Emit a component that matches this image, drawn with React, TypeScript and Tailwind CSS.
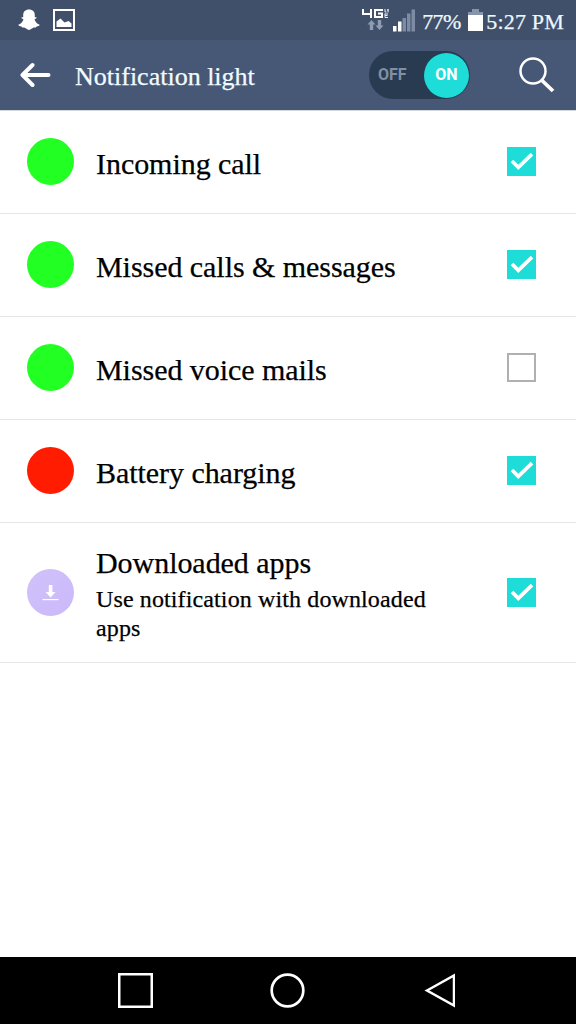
import { useState } from 'react'
import clsx from 'clsx'

type Item = {
  id: string
  title: string
  detail?: string
  color: 'green' | 'red' | 'app'
  enabled: boolean
}

const initialItems: Item[] = [
  { id: 'incoming', title: 'Incoming call', color: 'green', enabled: true },
  { id: 'missed', title: 'Missed calls & messages', color: 'green', enabled: true },
  { id: 'voicemail', title: 'Missed voice mails', color: 'green', enabled: false },
  { id: 'battery', title: 'Battery charging', color: 'red', enabled: true },
  {
    id: 'apps',
    title: 'Downloaded apps',
    detail: 'Use notification with downloaded apps',
    color: 'app',
    enabled: true,
  },
]

function StatusBar() {
  return (
    <div className="flex h-10 items-center bg-[#40506b] pl-[18px] pr-3 text-[#edf8ff]">
      <svg className="h-[22px] w-[22px]" viewBox="0 0 22 22" fill="#fff">
        <path d="M11 .5C7.300.5 5.200 2.800 5.200 6v2.200l-1.500.1c-.6.300-.3 1 .4 1.300l1.400.8C4.600 12.800 2.800 15 .300 15.800c.2 1 1.700 1.500 3.200 1.600l.6 1.200c2-.3 3 .2 4 1 1.100.9 2 1.400 2.900 1.400s1.800-.5 2.900-1.400c1-.8 2-1.300 4-1l.6-1.200c1.500-.1 3-.6 3.200-1.600-2.500-.8-4.300-3-5.200-5.400l1.400-.8c.7-.3 1-1 .4-1.300l-1.500-.1V6C16.800 2.800 14.700.5 11 .5z" />
      </svg>
      <svg className="ml-[13px] h-[22px] w-[22px]" viewBox="0 0 22 22">
        <rect x="1" y="1" width="20" height="20" fill="none" stroke="#fff" strokeWidth="2" />
        <path d="M3.500 18v-5.500L7.500 9.500l4 4 4-1.500 3 2.500V18z" fill="#fff" />
      </svg>

      <div className="ml-auto flex items-center">
        <svg className="h-[26px] w-[54px]" viewBox="0 0 54 26">
          {/* 4G LTE badge */}
          <g fill="none" stroke="#fff" strokeWidth="2">
            <path d="M1 2v5h9M9 2v9" />
            <path d="M21 3h-8v7h7V6.500h-4" />
          </g>
          <path d="M23 2v3h1.500M26 2v3.500M25 3h2M23 6.500v4M23 7h3M23 8.500h2.500M23 10.500h3" stroke="#e5eaf0" strokeWidth="1" fill="none" />
          <path d="M9.500 13l4 4.500h-2.300V23H7.800v-5.500H5.500zM17.500 23l-4-4.500h2.300V13h3.400v5.500h2.300z" fill="#8f9bb0" />
          <path d="M31 19h3.500v5.500H31zM36 14.500h3.500v10H36z" fill="#fff" />
          <path d="M40.500 11H44v13.500h-3.500zM45 6.500h3.500v18H45zM49.500 2.500H53v22h-3.500z" fill="#7d8ba3" />
        </svg>
        <span className="ml-[6px] mt-[3px] w-[39px] whitespace-nowrap text-[22px] leading-[26px] tracking-[-0.6px]">77%</span>
        <svg className="ml-[7px] h-[22px] w-[15px]" viewBox="0 0 15 22">
          <path d="M4 0h7v3h4v3H0V3h4z" fill="#8794aa" />
          <rect y="6" width="15" height="16" fill="#fff" />
        </svg>
        <span className="ml-[3px] mt-[3px] whitespace-nowrap text-[22px] leading-[26px] tracking-[0.2px]">5:27 PM</span>
      </div>
    </div>
  )
}

function Toggle({ on, onChange }: { on: boolean; onChange: () => void }) {
  return (
    <button
      onClick={onChange}
      className="flex h-12 w-[101px] items-center justify-between rounded-full bg-[#283b51] pl-[9px] pr-[1px] font-['Roboto',sans-serif] text-[16px] font-bold [-webkit-text-stroke:0]"
    >
      <span className="text-[#8190a4]">OFF</span>
      <span
        className={clsx(
          'flex h-[45px] w-[45px] items-center justify-center rounded-full text-white',
          on ? 'bg-[#1edcd7]' : 'bg-[#65758c]',
        )}
      >
        ON
      </span>
    </button>
  )
}

function Checkbox({ checked }: { checked: boolean }) {
  if (!checked) {
    return <span className="h-[29px] w-[29px] shrink-0 border-2 border-[#b0b0b0] bg-white" />
  }
  return (
    <span className="h-[29px] w-[29px] shrink-0 bg-[#1edcd7]">
      <svg viewBox="0 0 29 29" fill="none" stroke="#fff" strokeWidth="3.700">
        <path d="M5 14l6.300 6.300L25 7.200" />
      </svg>
    </span>
  )
}

function Led({ color }: { color: Item['color'] }) {
  if (color === 'app') {
    return (
      <span className="h-[47px] w-[47px] shrink-0 rounded-full bg-linear-to-br from-[#d0c2fb] to-[#cbb8f9]">
        <svg viewBox="0 0 47 47" fill="#fff">
          <path d="M21.800 16h3.600v7h3.200L23.600 28.500 18.500 23h3.300z" />
          <rect x="15.500" y="30" width="16" height="1.200" />
        </svg>
      </span>
    )
  }
  return (
    <span
      className={clsx('h-[47px] w-[47px] shrink-0 rounded-full', color === 'green' ? 'bg-[#22ff22]' : 'bg-[#ff1c00]')}
    />
  )
}

export default function App() {
  const [on, setOn] = useState(true)
  const [items, setItems] = useState(initialItems)

  const toggleItem = (id: string) => {
    setItems((prev) => prev.map((i) => (i.id === id ? { ...i, enabled: !i.enabled } : i)))
  }

  return (
    <div className="flex h-[1024px] w-[576px] flex-col overflow-hidden bg-white font-['Liberation_Serif',serif] [-webkit-text-stroke:0.25px]">
      <StatusBar />
      <header className="flex h-[70px] items-center bg-[#465876] pl-5 pr-[21px]">
        <svg className="h-[26px] w-[31px]" viewBox="0 0 31 26" fill="none" stroke="#fff" strokeWidth="4" strokeLinecap="round" strokeLinejoin="round">
          <path d="M28.500 13H3M12.500 3L2.500 13l10 10" />
        </svg>
        <h1 className="ml-6 mt-[3px] whitespace-nowrap text-[26px] leading-8 text-[#f2fbff]">Notification light</h1>
        <div className="ml-auto flex items-center gap-[49px]">
          <Toggle on={on} onChange={() => setOn(!on)} />
          <svg className="h-[36px] w-[36px]" viewBox="0 0 36 36" fill="none" stroke="#fff">
            <circle cx="14" cy="14" r="12.500" strokeWidth="2.500" />
            <path d="M22.500 23L34 34" strokeWidth="3.800" />
          </svg>
        </div>
      </header>

      <main className="flex-1 border-t border-[#d3d8df]">
        {items.map((item) => (
          <div
            key={item.id}
            onClick={() => toggleItem(item.id)}
            className={clsx(
              'flex items-center border-b border-[#e6e6e6] pl-[27px] pr-10',
              item.detail ? 'h-[140px]' : 'h-[103px] pb-px',
            )}
          >
            <Led color={item.color} />
            <div className={clsx('ml-[22px] w-[350px] text-black', item.detail ? 'mt-[3px]' : 'mt-1')}>
              <p className="whitespace-nowrap text-[30px] leading-9 tracking-[-0.05px]">{item.title}</p>
              {item.detail && <p className="mt-1 text-[24px] leading-[29px] tracking-[0.12px]">{item.detail}</p>}
            </div>
            <div className="ml-auto flex">
              <Checkbox checked={item.enabled} />
            </div>
          </div>
        ))}
      </main>

      <nav className="flex h-[67px] items-center gap-[117px] bg-black pl-[118px]">
        <svg className="h-[35px] w-[35px]" viewBox="0 0 35 35" fill="none" stroke="#fff" strokeWidth="2.500">
          <rect x="1.250" y="1.250" width="32.500" height="32.500" />
        </svg>
        <svg className="h-[35px] w-[35px]" viewBox="0 0 35 35" fill="none" stroke="#fff" strokeWidth="2.700">
          <circle cx="17.500" cy="17.500" r="15.800" />
        </svg>
        <svg className="h-[35px] w-[33px]" viewBox="0 0 33 35" fill="none" stroke="#fff" strokeWidth="2.500">
          <path d="M5 17.500L32 2.500v30z" />
        </svg>
      </nav>
    </div>
  )
}
